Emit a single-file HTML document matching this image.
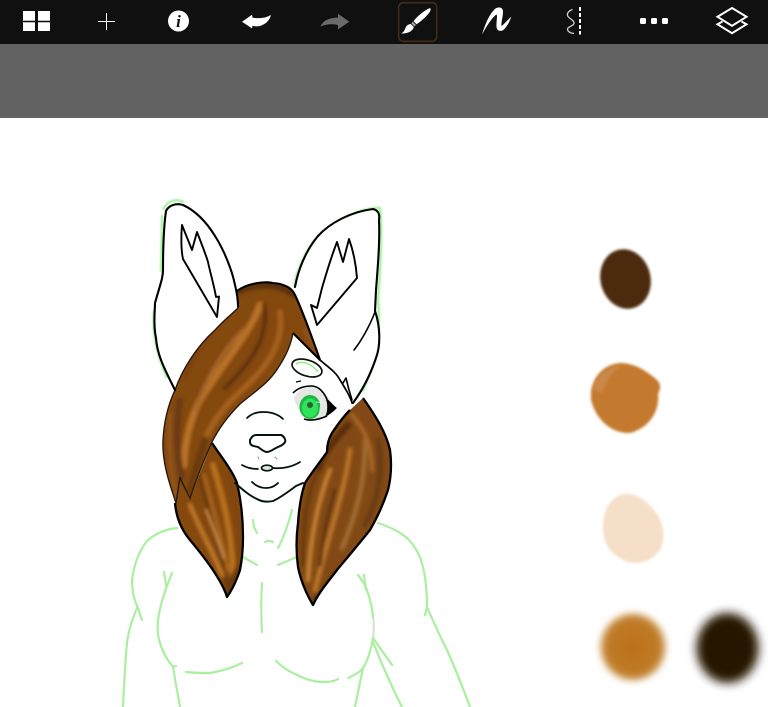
<!DOCTYPE html>
<html><head><meta charset="utf-8"><title>Drawing canvas</title>
<style>html,body{margin:0;padding:0;width:768px;height:707px;overflow:hidden;background:#fff}svg{display:block}text{font-family:"Liberation Serif",serif}</style>
</head><body>
<svg width="768" height="707" viewBox="0 0 768 707" xmlns="http://www.w3.org/2000/svg">
<defs>
<filter id="b03" x="-5%" y="-5%" width="110%" height="110%"><feGaussianBlur stdDeviation="0.3"/></filter>
<filter id="b1" x="-10%" y="-10%" width="120%" height="120%"><feGaussianBlur stdDeviation="0.8"/></filter>
<filter id="b2" x="-20%" y="-20%" width="140%" height="140%"><feGaussianBlur stdDeviation="1.5"/></filter>
<filter id="b15" x="-20%" y="-20%" width="140%" height="140%"><feGaussianBlur stdDeviation="1.4"/></filter>
<filter id="b4" x="-30%" y="-30%" width="160%" height="160%"><feGaussianBlur stdDeviation="3.6"/></filter>
<filter id="b5" x="-30%" y="-30%" width="160%" height="160%"><feGaussianBlur stdDeviation="4.8"/></filter>
<radialGradient id="g4"><stop offset="0" stop-color="#bb7018"/><stop offset=".7" stop-color="#bf7926"/><stop offset="1" stop-color="#c48636"/></radialGradient>
<clipPath id="cBang"><path d="M237 291C246 284 262 281 273 283C285 284 292 288 295 295C303 312 313 340 320 360C310 350 300 340 293 333C291 345 286 356 278 368C268 384 254 392 240 404C228 416 218 430 212 442C204 460 196 480 190 498C186 490 182 483 180 477L176 503C168 480 162 460 163 440C164 420 168 405 175 390C182 370 196 347 215 330C224 320 232 314 238 308Z"/></clipPath>
<clipPath id="cLeft"><path d="M212 443C222 458 232 470 237 483C241 500 243 518 243 537C243 550 242 560 240 570C236 582 232 590 227 597C222 580 205 558 190 540C180 528 176 515 175 503L180 477L190 498Z"/></clipPath>
<clipPath id="cRight"><path d="M363 398C375 415 386 432 390 450C392 465 391 478 388 490C383 505 377 518 370 530C358 545 347 558 337 570C328 582 319 592 313 605C307 595 301 582 298 567C296 552 296 538 298 523C299 508 301 495 305 483C312 472 320 462 327 452C327 445 329 438 332 433C338 424 344 416 350 410Z"/></clipPath>
</defs>

<rect width="768" height="707" fill="#fff"/>
<rect y="44" width="768" height="74" fill="#626262"/>
<rect width="768" height="44" fill="#101010"/>

<!-- toolbar icons -->
<g fill="#fff">
<rect x="23" y="11" width="12" height="9.7"/><rect x="38" y="11" width="12" height="9.7"/>
<rect x="23" y="22.3" width="12" height="8.7"/><rect x="38" y="22.3" width="12" height="8.7"/>
<rect x="98" y="21" width="17" height="1"/><rect x="106" y="13" width="1" height="17"/>
<circle cx="178.5" cy="21" r="10.5"/>
<path d="M242 21.7L252 14.8L252.5 17.6C258 18.6 265 18.5 270.8 15C270 20 266 24 260 26C257 26.6 254.5 26.4 252.5 25.8L252 28.4Z"/>
<path fill="#6a6a6a" d="M349.3 21.7L338 13.8L338 17.6C330 17.8 323 20 320.5 26.6C325 24.2 332 23.6 338 25L338 29.4Z"/>
<path d="M429.5 8.2C431 8 430.8 10 430 11.6C426 17 421 21.4 416.5 24.2L413.5 21.2C417 16.5 424 10.5 429.5 8.2Z"/>
<path fill="#a8a8a8" d="M412.8 21.8L416 25L414.4 26.4L411.3 23.3Z"/>
<path d="M410.8 24L413.8 27C412.8 31 408 33.8 401 33.4C404 32.2 404.6 30 405.6 27.6C406.6 25.4 408.6 24.2 410.8 24Z"/>
<path d="M482.2 34.5C484.5 26 489 14 495.5 8.5C499 6.5 503 7.5 503 11.5C503 17 501 22 501.5 26C504 24.5 507.5 20 511.3 16.8C509.5 22 506.5 27.5 503 30.2C499.5 31.8 496.8 30.4 496.5 26.5C496.2 21 497.8 15.5 496.4 14.5C492 17.5 486 27 482.2 34.5Z"/>
<rect x="579" y="7" width="2" height="4"/><rect x="579" y="13" width="2" height="4"/><rect x="579" y="19" width="2" height="4"/><rect x="579" y="25" width="2" height="4"/><rect x="579" y="31" width="2" height="3.5"/>
<rect x="640" y="18" width="6" height="6" rx="1.5"/><rect x="651" y="18" width="6" height="6" rx="1.5"/><rect x="662" y="18" width="6" height="6" rx="1.5"/>
</g>
<text x="178.5" y="27" text-anchor="middle" font-size="17" font-weight="700" font-style="italic" fill="#101010">i</text>
<rect x="398.7" y="2.7" width="38" height="38.6" rx="4.5" fill="none" stroke="#432c12" stroke-width="1.6"/>
<path d="M572.5 9.5C568 11 566.5 14 568 16.5C570 19 574.5 20.5 574 23.5C573.5 26 568 26.5 567.5 29C567.5 31.5 570 33 574 33.5" fill="none" stroke="#cfcfcf" stroke-width="1.3"/>
<g fill="none" stroke="#fff" stroke-width="2">
<path d="M732 8L746.5 16.8L732 25.8L717.5 16.8Z"/>
<path d="M722.5 21.5L717.5 24.3L732 33.2L746.5 24.3L741.5 21.5"/>
</g>

<!-- artwork -->
<g filter="url(#b03)">
<g fill="none" stroke="#aaefa0" stroke-width="2.2" stroke-linecap="round" stroke-linejoin="round">
<path d="M177 528C165 529 153 535 147 541C139 551 134 565 132 580C132 592 135 602 138 608L142 620"/>
<path d="M137 608C132 620 128 632 127 643C125 665 124 685 123 707"/>
<path d="M172 573C165 590 160 605 158 620C157 630 158 637 160 643C163 653 168 661 173 667C175 680 178 695 180 707"/>
<path d="M164 572L166 585M173 667L176 666"/>
<path d="M186 672C195 673 202 673 210 673C222 671 232 668 242 663"/>
<path d="M276 661C282 667 290 672 297 675C307 680 316 682 323 682C330 682 335 681 338 679"/>
<path d="M348 678C355 675 360 672 363 668C368 660 371 650 373 638"/>
<path d="M373 638C374 630 374 622 373 617" stroke="#d6e4d2"/>
<path d="M373 617C372 605 369 595 365 585L358 575M364 575L366 590"/>
<path d="M373 638L392 665M373 642C382 665 392 687 402 707M363 668L355 707"/>
<path d="M378 523C390 527 400 532 407 538C417 548 421 558 423 567C426 580 427 595 427 607C433 621 440 636 447 650C455 668 463 688 470 707M425 615L427 607"/>
<path d="M262 583C261 600 261 616 262 632"/>
<path d="M292 510C288 525 284 537 278 548M253 520L254 527L257 533M265 542C268 540 271 541 273 542M243 557L257 565M278 565L297 557"/>
<path d="M232 462L242 466" stroke-width="1"/>
</g>

<!-- ear halos -->
<g fill="none" stroke="#9cf094" stroke-width="2.2" filter="url(#b1)" stroke-linejoin="round">
<path d="M163 210C167 201 175 198 184 202M162 215L161 272"/>
<path d="M294 287C297 268 309 240 330 226C345 216 365 207 380 208C382 225 381 260 378 300C381 330 376 365 362 392"/>
<path d="M154 310C152 335 157 355 167 378"/>
<path d="M310 303C318 298 325 297 330 302"/>
<path d="M195 250C193 262 195 272 197 285M350 235L352 270M318 290C324 280 328 265 331 258" opacity=".6"/>
</g>
<path fill="#fff" d="M166 211C168 205 176 203 185 206C198 212 214 232 223 250C232 270 236 290 238 309L300 296C300 275 310 250 320 233C335 222 358 210 373 209C381 210 379 225 378 250C377 280 375 300 375 311C381 325 381 345 373 363C367 378 362 392 353 403L335 452C320 480 300 490 268 502C250 500 236 490 228 470L200 440C180 410 172 395 175 390C162 365 154 335 155 303C160 285 163 275 163 270C163 250 164 225 166 211Z"/>

<!-- hair locks -->
<g clip-path="url(#cLeft)">
<rect x="160" y="430" width="100" height="180" fill="#84480f"/>
<g fill="none" filter="url(#b2)" stroke-linecap="round">
<path d="M198 470C205 500 220 545 228 590" stroke="#6a3a0f" stroke-width="4"/>
<path d="M213 465C222 495 232 530 233 575" stroke="#b8701f" stroke-width="6"/>
<path d="M190 505C200 530 212 550 222 575" stroke="#bb7526" stroke-width="5"/>
<path d="M204 475C212 505 222 540 228 570" stroke="#a8651e" stroke-width="4"/>
<path d="M228 475C237 500 240 530 238 560" stroke="#7a450f" stroke-width="3"/>
<path d="M206 510C213 527 219 543 224 558" stroke="#c98c4a" stroke-width="2.5"/>
<path d="M226 596L232 580L240 565" stroke="#693a0c" stroke-width="6"/>
</g>
</g>
<g clip-path="url(#cRight)">
<rect x="290" y="390" width="110" height="220" fill="#824a13"/>
<g fill="none" filter="url(#b2)" stroke-linecap="round">
<path d="M348 425C330 445 322 455 318 470" stroke="#5a2f0d" stroke-width="7"/>
<path d="M350 450C345 490 330 530 315 590" stroke="#b8732a" stroke-width="5"/>
<path d="M330 470C318 500 310 540 308 580" stroke="#c07a30" stroke-width="5"/>
<path d="M318 470C306 495 302 530 303 565" stroke="#6a3a10" stroke-width="4"/>
<path d="M365 440C366 480 356 515 342 548" stroke="#a06a32" stroke-width="5"/>
<path d="M378 440C384 470 378 500 365 525" stroke="#6b3e14" stroke-width="6"/>
<path d="M352 415C365 430 372 445 372 470" stroke="#a8662a" stroke-width="4"/>
<path d="M335 490C326 520 322 545 320 565" stroke="#5e3210" stroke-width="3"/>
<path d="M340 570L315 600" stroke="#5a300c" stroke-width="5"/>
</g>
</g>
<g fill="none" stroke="#000" stroke-width="2.3" stroke-linejoin="round">
<path d="M212 443C222 458 232 470 237 483C241 500 243 518 243 537C243 550 242 560 240 570C236 582 232 590 227 597C222 580 205 558 190 540C180 528 176 515 175 503"/>
<path d="M363 398C375 415 386 432 390 450C392 465 391 478 388 490C383 505 377 518 370 530C358 545 347 558 337 570C328 582 319 592 313 605C307 595 301 582 298 567C296 552 296 538 298 523C299 508 301 495 305 483C312 472 320 462 327 452C327 445 329 438 332 433C338 424 344 416 350 410"/>
</g>

<!-- bang -->
<g clip-path="url(#cBang)">
<rect x="155" y="275" width="175" height="235" fill="#84480f"/>
<g fill="none" filter="url(#b2)" stroke-linecap="round">
<path d="M240 290C258 282 280 282 294 294" stroke="#5a300f" stroke-width="8"/>
<path d="M260 305C252 330 225 360 200 400C190 420 185 440 184 465" stroke="#b87226" stroke-width="7"/>
<path d="M264 305C270 335 252 362 225 388" stroke="#5e3310" stroke-width="4"/>
<path d="M280 312C284 340 270 365 242 390C224 406 210 424 202 448" stroke="#a5611b" stroke-width="6"/>
<path d="M243 330C222 352 206 378 196 410" stroke="#a8662a" stroke-width="4"/>
<path d="M305 330L318 356" stroke="#8e5218" stroke-width="4"/>
<path d="M180 400C176 425 176 450 182 478" stroke="#6a3b12" stroke-width="6"/>
<path d="M170 415C168 440 170 470 176 495" stroke="#90561c" stroke-width="4"/>
<path d="M205 440L190 490" stroke="#6b3a10" stroke-width="7"/>
<path d="M230 310C210 330 195 350 186 375" stroke="#7a430f" stroke-width="6"/>
</g>
</g>
<path fill="none" stroke="#000" stroke-width="2.1" stroke-linejoin="round" d="M237 291C246 284 262 281 273 283C285 284 292 288 295 295C303 312 313 340 320 360C310 350 300 340 293 333"/>
<path fill="none" stroke="#241408" stroke-width="1.3" d="M293 333C291 345 286 356 278 368C268 384 254 392 240 404C228 416 218 430 212 442C204 460 196 480 190 498C186 490 182 483 180 477L176 503C168 480 162 460 163 440C164 420 168 405 175 390C182 370 196 347 215 330C224 320 232 314 238 308"/>

<!-- ear lines -->
<g fill="none" stroke="#000" stroke-width="2.1" stroke-linejoin="round" stroke-linecap="round">
<path d="M175 390C165 370 157 355 156 338C153 325 155 310 155 303C160 285 163 278 163 270C163 250 164 225 166 211C169 205 176 203 183 205C196 211 207 223 215 236C224 250 232 270 235 285C237 293 238 300 238 307"/>
<path d="M182 225L192 250L197 232C202 245 206 255 208 262C210 272 214 285 216 297L219 296.5L217 317L183 259C181 250 181 235 182 225Z" stroke-width="1.9"/>
<path d="M295 287C298 270 306 250 318 236C330 223 350 212 373 209C378 210 380 214 379 220C380 240 378 265 376 290L375 311C380 325 381 345 376 358C371 373 364 388 353 403"/>
<path d="M375 312C370 325 362 340 354 350" stroke-width="1.6"/>
<path d="M311 305L317 308L322 288C325 278 330 260 337 242L343 262L349 239C353 250 356 265 357 278L317 325Z" stroke-width="1.9"/>
<path d="M320 360C328 367 336 372 340 380C345 388 350 396 352 403" stroke-width="1.7"/>
<path d="M343 383L346 378L349 390L352 400" stroke-width="1.6"/>
</g>

<!-- face -->
<ellipse cx="307" cy="368" rx="15.5" ry="8" transform="rotate(18 307 368)" fill="#fff" stroke="#0c180c" stroke-width="1.7"/>
<path d="M296 364C302 360 312 364 318 372" fill="none" stroke="#8feb88" stroke-width="1.4"/>
<g fill="none" stroke="#06120a" stroke-width="1.7" stroke-linecap="round">
<path d="M247 418C252 413 258 412 263 412C272 412 279 415 283 419"/>
<path d="M250 440C252 436 254 435 256 435L281 435C284 436 286 440 285 442C283 446 279 446 276 448C272 450 270 452 267 452C264 452 261 449 258 447C254 446 250 446 250 442Z" stroke-width="2"/>
<path d="M242 465C247 468 252 469 258 469M273 468C282 469 292 467 300 462"/>
<ellipse cx="267" cy="468" rx="5.5" ry="2.8" fill="#dfe6dc"/>
<path d="M252 482C257 487 262 488 266 488C271 488 275 486 278 483" stroke-width="1.8"/>
<path d="M258 457l1 2M275 457l2 2" stroke="#8a958a" stroke-width="1"/>
<path d="M235 483C243 490 250 496 257 499C262 502 268 502 273 501C280 498 288 492 296 486L303 483" stroke-width="1.9"/>
</g>
<g>
<path d="M294 398C298 390 306 385 313 386C322 388 328 398 336 408C330 415 322 419 314 419C304 419 297 410 294 398Z" fill="#e4e6e2"/>
<ellipse cx="310" cy="407" rx="10.5" ry="12" fill="#1cb944"/>
<ellipse cx="310" cy="408" rx="8" ry="9.5" fill="#30e25a"/>
<circle cx="310" cy="405" r="3" fill="#2f5f3d"/>
<path d="M316 402L326 403M322 396L319 416" stroke="#f2f6f2" stroke-width="1" opacity=".7"/>
<path d="M325 397C330 401 333 405 337 408C333 412 329 415 325 417C328 411 328 403 325 397Z" fill="#000"/>
<path d="M293 393C298 388 304 386 311 386C317 386 322 389 327 399M304 419C310 421 318 420 327 416" fill="none" stroke="#000" stroke-width="1.6"/>
<path d="M296 382L301 381" stroke="#000" stroke-width="1.4"/>
</g>
</g>

<!-- swatches -->
<ellipse cx="625.5" cy="279" rx="25" ry="30" transform="rotate(-14 625.5 279)" fill="#4c2a0a" filter="url(#b15)"/>
<path d="M591 392C593 375 606 363 622 363C637 364 648 372 657 380C662 385 660 390 658 394C660 410 650 428 630 433C612 434 596 420 591 400Z" fill="#c47a2e" filter="url(#b15)"/>
<path d="M594 390C596 375 608 366 622 365C612 372 606 380 602 393Z" fill="#d09560" opacity=".55" filter="url(#b2)"/>
<path d="M603 528C603 508 612 494 628 494C640 495 648 503 654 510C664 522 666 538 660 550C652 561 640 565 628 562C612 556 603 545 603 528Z" fill="#f5dfc8" filter="url(#b15)"/>
<ellipse cx="633" cy="647" rx="32" ry="33" fill="url(#g4)" filter="url(#b4)"/>
<ellipse cx="727.5" cy="648" rx="31" ry="35" fill="#281606" filter="url(#b5)"/>
</svg>
</body></html>
